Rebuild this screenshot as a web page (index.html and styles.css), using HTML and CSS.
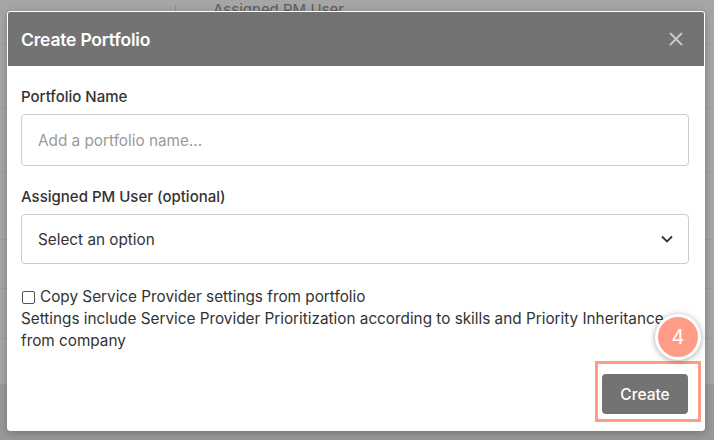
FILE: index.html
```html
<!DOCTYPE html>
<html>
<head>
<meta charset="utf-8">
<link rel="stylesheet" href="styles.css">
</head>
<body>
<div class="page">
  <div class="bg-row bg-top"><span class="bg-divider"></span><span class="bg-text">Assigned PM User</span></div>
  <div class="bg-row r2"></div>
  <div class="bg-row r3"></div>
  <div class="bg-row r4"></div>
  <div class="bg-row r5"></div>
  <div class="bg-row r6"></div>
  <div class="bg-row r7"></div>
  <div class="bg-foot"></div>
</div>

<div class="modal">
  <div class="modal-header">
    <h2 class="modal-title">Create Portfolio</h2>
    <svg class="close" width="16" height="16" viewBox="0 0 16 16"><path d="M2 2 L14 14 M14 2 L2 14" stroke="#c9c9c9" stroke-width="1.8" fill="none"/></svg>
  </div>
  <div class="modal-body">
    <label class="label">Portfolio Name</label>
    <div class="field"><span class="placeholder">Add a portfolio name...</span></div>
    <label class="label">Assigned PM User (optional)</label>
    <div class="field select"><span class="value">Select an option</span>
      <svg width="14" height="10" viewBox="0 0 14 10"><path d="M2 2.5 L7 7.5 L12 2.5" stroke="#333" stroke-width="1.8" fill="none"/></svg>
    </div>
    <div class="check-line"><span class="checkbox"></span>Copy Service Provider settings from portfolio</div>
    <p class="note">Settings include Service Provider Prioritization according to skills and Priority Inheritance from company</p>
  </div>
  <div class="modal-footer">
    <div class="highlight"><button class="btn">Create</button></div>
  </div>
  <div class="badge">4</div>
</div>
</body>
</html>
```
FILE: styles.css
```css
html, body { margin: 0; padding: 0; }
body {
  width: 714px; height: 440px; overflow: hidden; position: relative;
  font-family: "Inter", "Lato", sans-serif;
  background: #a6a6a6;
}
.page { display: flex; flex-direction: column; height: 440px; }
.bg-row { border-bottom: 1px solid #9c9c9c; box-sizing: border-box; position: relative; }
.bg-top { height: 44px; display: flex; align-items: flex-start; padding-left: 175px; }
.bg-divider { width: 1px; height: 14px; background: #8e8e8e; margin-top: 5px; }
.bg-text { margin-left: 37px; margin-top: 1px; font-size: 15px; color: #5e5e5e; line-height: 18px; }
.r2 { height: 64px; }
.r3 { height: 65px; }
.r4 { height: 67px; }
.r5 { height: 49px; }
.r6 { height: 50px; }
.r7 { height: 45px; border-bottom: none; }
.bg-foot { flex: 1; background: #999; }

.modal {
  position: absolute; left: 7px; top: 11px; width: 698px; height: 420px;
  background: #fff; border-radius: 3px; box-sizing: border-box;
  border: 1px solid #fff;
  box-shadow: 0 2px 8px rgba(0,0,0,0.25);
  display: flex; flex-direction: column;
}
.modal-header {
  flex: 0 0 54px; background: #737373; border-radius: 2px 2px 0 0;
  display: flex; align-items: center; justify-content: space-between;
  padding: 0 20px 0 13px;
}
.modal-title { margin: 0; color: #fff; font-size: 17.5px; font-weight: 600; letter-spacing: -0.2px; }
.close { display: block; }
.modal-body { padding: 21px 15px 0 13px; display: flex; flex-direction: column; }
.label { font-size: 15px; color: #333; font-weight: 450; line-height: 20px; }
.field {
  margin-top: 7px; height: 52px; box-sizing: border-box; flex-shrink: 0;
  border: 1px solid #cccccc; border-radius: 4px;
  display: flex; align-items: center; padding: 0 16px; margin-bottom: 21px;
  font-size: 15.3px;
}
.placeholder { color: #9a9a9a; }
.select { height: 50px; justify-content: space-between; padding-right: 14px; margin-bottom: 22px; }
.value { color: #333; }
.check-line { font-size: 15.3px; color: #333; line-height: 22px; display: flex; align-items: center; }
.checkbox { width: 11px; height: 11px; border: 1px solid #555; border-radius: 2px; margin: 0 5px 0 1px; }
.note { margin: 0; font-size: 15.3px; color: #333; line-height: 22px; }
.modal-footer { flex: 1; display: flex; justify-content: flex-end; align-items: flex-end; padding: 0 3px 8px 0; }
.highlight { border: 3px solid #ff9c88; padding: 10px 10px 5px 4px; }
.btn {
  width: 86px; height: 40px; background: #737373; color: #fff; border: none; border-radius: 4px;
  font-family: inherit; font-size: 15.5px; font-weight: 500;
}
.badge {
  position: absolute; left: 647px; top: 302px; width: 40px; height: 40px; border-radius: 50%;
  background: #ff9c88; border: 3px solid #fff; color: #fff; font-size: 20px;
  display: flex; align-items: center; justify-content: center;
  box-shadow: 0 1px 6px rgba(0,0,0,0.35);
}
```
